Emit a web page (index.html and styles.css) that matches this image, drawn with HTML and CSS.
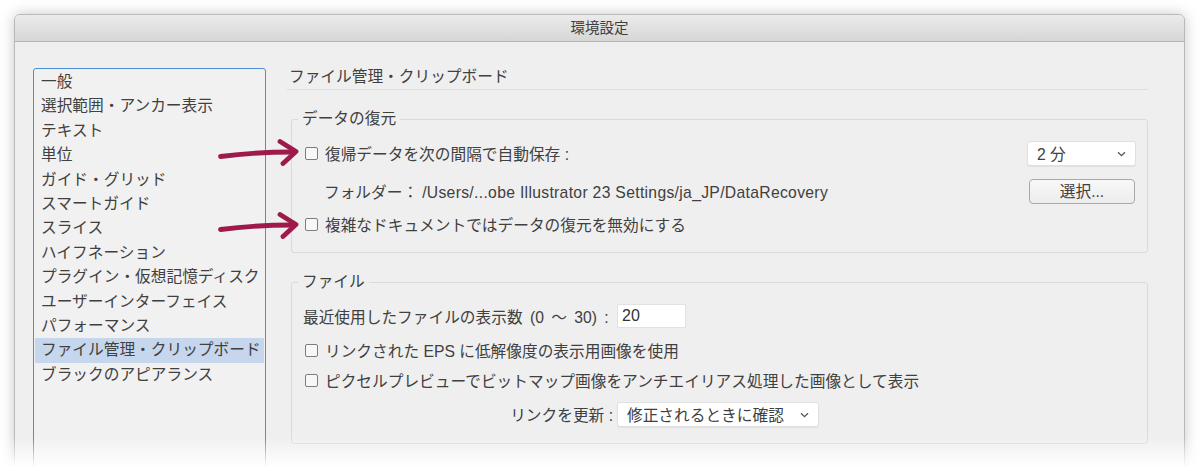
FILE: index.html
```html
<!DOCTYPE html>
<html lang="ja">
<head>
<meta charset="utf-8">
<title>環境設定</title>
<link rel="stylesheet" href="styles.css">
</head>
<body>
<div class="stage">
  <div class="window">
    <div class="titlebar">環境設定</div>
    <div class="content">
      <ul class="sidebar">
        <li>一般</li>
        <li>選択範囲・アンカー表示</li>
        <li>テキスト</li>
        <li>単位</li>
        <li>ガイド・グリッド</li>
        <li>スマートガイド</li>
        <li>スライス</li>
        <li>ハイフネーション</li>
        <li>プラグイン・仮想記憶ディスク</li>
        <li>ユーザーインターフェイス</li>
        <li>パフォーマンス</li>
        <li class="selected">ファイル管理・クリップボード</li>
        <li>ブラックのアピアランス</li>
      </ul>
      <div class="main">
        <div class="heading">ファイル管理・クリップボード</div>
        <fieldset class="group group-recovery">
          <legend>データの復元</legend>
          <div class="row row-a">
            <label class="check"><span class="box"></span>復帰データを次の間隔で自動保存 :</label>
            <div class="select select-small"><span>2 分</span><svg class="chev" width="9" height="6" viewBox="0 0 9 6"><path d="M1 1.2 L4.5 4.6 L8 1.2" fill="none" stroke="#555" stroke-width="1.3"/></svg></div>
          </div>
          <div class="row row-b">
            <div class="folder"><span class="folder-label">フォルダー：</span><span class="path">/Users/...obe Illustrator 23 Settings/ja_JP/DataRecovery</span></div>
            <div class="button">選択...</div>
          </div>
          <div class="row row-c">
            <label class="check"><span class="box"></span>複雑なドキュメントではデータの復元を無効にする</label>
          </div>
        </fieldset>
        <fieldset class="group group-file">
          <legend>ファイル</legend>
          <div class="row row-d">
            <span class="field-label spaced">最近使用したファイルの表示数 (0 〜 30) :</span>
            <div class="input">20</div>
          </div>
          <div class="row row-e">
            <label class="check"><span class="box"></span>リンクされた EPS に低解像度の表示用画像を使用</label>
          </div>
          <div class="row row-f">
            <label class="check"><span class="box"></span>ピクセルプレビューでビットマップ画像をアンチエイリアス処理した画像として表示</label>
          </div>
          <div class="row row-g">
            <span class="field-label right">リンクを更新 :</span>
            <div class="select select-wide"><span>修正されるときに確認</span><svg class="chev" width="9" height="6" viewBox="0 0 9 6"><path d="M1 1.2 L4.5 4.6 L8 1.2" fill="none" stroke="#555" stroke-width="1.3"/></svg></div>
          </div>
        </fieldset>
      </div>
    </div>
  </div>
  <svg class="arrow arrow-1" width="84" height="30" viewBox="0 0 84 30"><path d="M2.5 17.5 C 25 14.5, 50 13, 75 13" fill="none" stroke="#9e1a4b" stroke-width="4.8" stroke-linecap="round"/><path d="M62 2.5 L78 12.5 L65 24.5" fill="none" stroke="#9e1a4b" stroke-width="4.8" stroke-linecap="round" stroke-linejoin="round"/></svg>
  <svg class="arrow arrow-2" width="84" height="30" viewBox="0 0 84 30"><path d="M2.5 17.5 C 25 14.5, 50 13, 75 13" fill="none" stroke="#9e1a4b" stroke-width="4.8" stroke-linecap="round"/><path d="M62 2.5 L78 12.5 L65 24.5" fill="none" stroke="#9e1a4b" stroke-width="4.8" stroke-linecap="round" stroke-linejoin="round"/></svg>
  <div class="fade"></div>
</div>
</body>
</html>
```
FILE: styles.css
```css
html, body {
  margin: 0;
  padding: 0;
  background: #ffffff;
}
body {
  width: 1200px;
  height: 471px;
  overflow: hidden;
  font-family: "Liberation Sans", "Noto Sans CJK JP", sans-serif;
  font-size: 15.7px;
  color: #404040;
}
.stage {
  position: relative;
  width: 1200px;
  height: 471px;
  overflow: hidden;
  padding-top: 14px;
  box-sizing: border-box;
}
.window {
  margin-left: 14px;
  width: 1171px;
  height: 480px;
  box-sizing: border-box;
  border: 1px solid #b9b9b9;
  border-radius: 6px 6px 0 0;
  background: #efefef;
  box-shadow: 0 0 14px rgba(0, 0, 0, 0.22);
}
.titlebar {
  height: 26px;
  line-height: 26px;
  text-align: center;
  font-size: 14.5px;
  color: #3e3e3e;
  background: linear-gradient(#ebebeb, #d6d6d6);
  border-bottom: 1px solid #b3b3b3;
  border-radius: 5px 5px 0 0;
}
.content {
  display: flex;
  gap: 21px;
  padding: 26px 36px 0 18px;
}
.sidebar {
  list-style: none;
  margin: 0;
  padding: 1px 0 0;
  width: 233px;
  height: 420px;
  box-sizing: border-box;
  border: 1px solid #4d8fd6;
  border-radius: 3px;
  background: #f1f1f1;
  flex: none;
}
.sidebar li {
  height: 24.4px;
  line-height: 24.4px;
  margin: 0 1px;
  padding-left: 6px;
  white-space: nowrap;
}
.sidebar li.selected {
  background: #c6d6ec;
}
.main {
  flex: 1;
  min-width: 0;
}
.heading {
  line-height: 18px;
  padding: 0 0 3px 2px;
  border-bottom: 1px solid #dedede;
}
.group {
  margin: 20px 0 0 4px;
  padding: 13px 11px 15px 11px;
  border: 1px solid #dadada;
  border-radius: 3px;
  min-width: 0;
}
.group legend {
  padding: 0 4px;
  margin-left: -5px;
  line-height: 18px;
}
.group-file {
  padding-bottom: 16px;
}
.row {
  display: flex;
  align-items: center;
}
.row-a { height: 25px; justify-content: space-between; }
.row-b { height: 25px; margin-top: 13px; justify-content: space-between; }
.row-c { height: 25px; margin-top: 8px; }
.row-d { height: 24px; gap: 4px; }
.row-e { height: 24px; margin-top: 10px; }
.row-f { height: 24px; margin-top: 6px; }
.row-g { height: 25px; margin-top: 10px; gap: 4px; }
.check {
  display: flex;
  align-items: center;
  margin-left: 2px;
  white-space: nowrap;
}
.box {
  width: 11px;
  height: 11px;
  border: 1px solid #7d7d7d;
  border-radius: 2px;
  background: #f7f7f7;
  margin-right: 7px;
  flex: none;
}
.select {
  display: flex;
  align-items: center;
  justify-content: space-between;
  height: 25px;
  box-sizing: border-box;
  background: #ffffff;
  border: 1px solid #e0e0e0;
  border-radius: 3px;
  box-shadow: 0 1px 1px rgba(0, 0, 0, 0.06);
  padding: 0 9px 0 9px;
  white-space: nowrap;
}
.select-small {
  width: 109px;
}
.select-wide {
  width: 202px;
}
.chev {
  flex: none;
}
.folder {
  padding-left: 21px;
  white-space: nowrap;
}
.folder-label {
  margin-right: 4px;
}
.path {
  letter-spacing: 0.32px;
}
.button {
  width: 106px;
  height: 25px;
  box-sizing: border-box;
  line-height: 23px;
  text-align: center;
  border: 1px solid #a9a9a9;
  border-radius: 4px;
  background: linear-gradient(#f8f8f8, #ececec);
  margin-right: 1px;
}
.field-label {
  width: 310px;
  white-space: nowrap;
  flex: none;
}
.field-label.spaced {
  word-spacing: 3px;
}
.field-label.right {
  text-align: right;
}
.input {
  width: 69px;
  height: 24px;
  box-sizing: border-box;
  line-height: 22px;
  padding-left: 4px;
  background: #ffffff;
  border: 1px solid #e2e2e2;
  color: #333;
  font-size: 16px;
}
.arrow {
  position: absolute;
  left: 218px;
}
.arrow-1 { top: 139px; }
.arrow-2 { top: 212px; }
.fade {
  position: absolute;
  left: 0;
  right: 0;
  bottom: 0;
  height: 34px;
  background: linear-gradient(rgba(255, 255, 255, 0), #ffffff 90%);
}
```
